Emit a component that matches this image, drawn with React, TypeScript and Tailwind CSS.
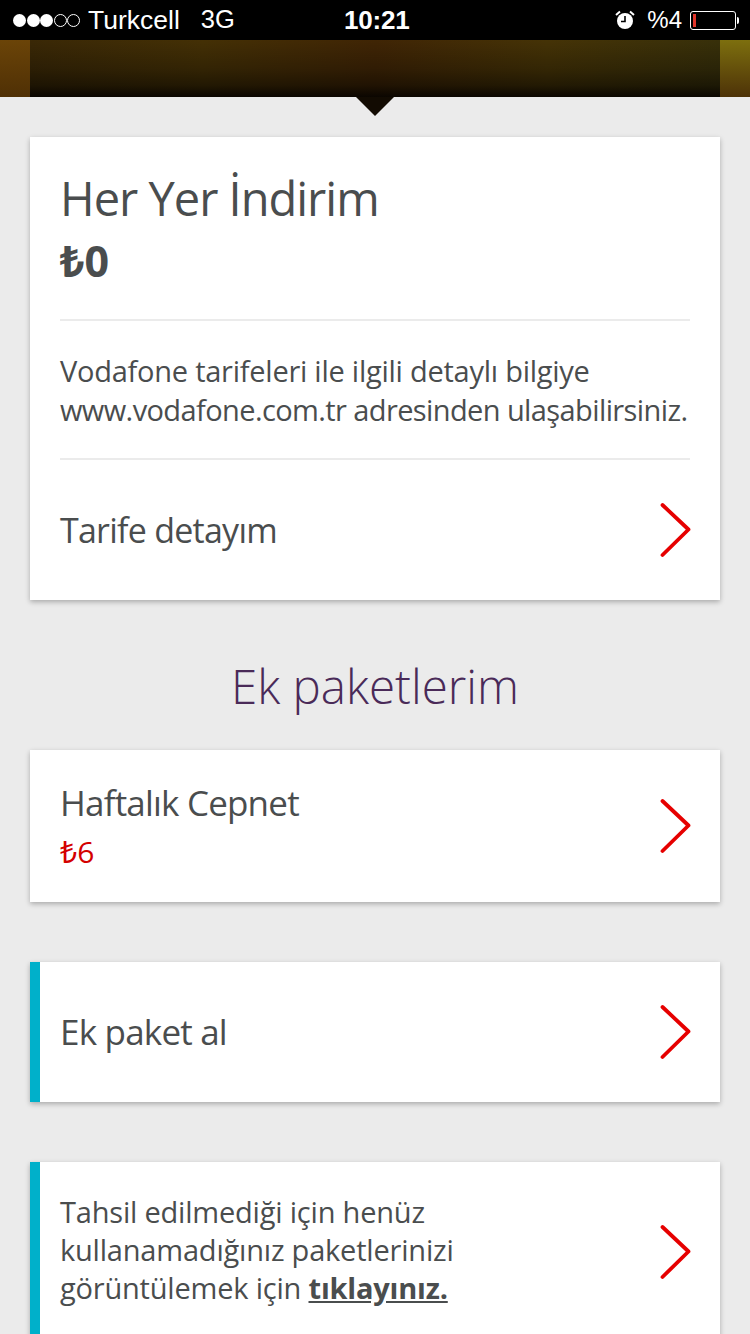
const font = { fontFamily: '"Open Sans", "Noto Sans", sans-serif' };

function Chevron() {
  return (
    <svg width="32" height="56" viewBox="0 0 32 56" className="shrink-0 mr-[-1px]" fill="none">
      <path d="M3.5 3 L29.5 27.5 L3.5 53" stroke="#e60000" strokeWidth="3.8" strokeLinecap="round" strokeLinejoin="round" />
    </svg>
  );
}

function StatusBar() {
  return (
    <div className="h-10 shrink-0 bg-black text-white flex items-center justify-between relative font-['Liberation_Sans',sans-serif] text-[24px] leading-none">
      <div className="flex items-center pl-[13px]">
        <div className="flex gap-[0.5px] items-center">
          {[0, 1, 2].map((i) => (
            <span key={i} className="w-[13px] h-[13px] rounded-full bg-white" />
          ))}
          {[0, 1].map((i) => (
            <span key={i} className="w-[13px] h-[13px] rounded-full border border-white" />
          ))}
        </div>
        <span className="ml-[8px] text-[26.5px]">Turkcell</span>
        <span className="ml-[21px] text-[25.5px]">3G</span>
      </div>
      <div className="absolute left-[344px] top-[7px] font-bold text-[26px] tracking-[-0.2px]">10:21</div>
      <div className="flex items-center pr-[11px]">
        <svg width="20" height="20" viewBox="0 0 20 20" className="mr-[12px]">
          <circle cx="10" cy="11" r="8" fill="#fff" />
          <path d="M10 6 V11.5 H6" stroke="#000" strokeWidth="1.6" fill="none" />
          <path d="M1 5 L5 1.5 M19 5 L15 1.5" stroke="#fff" strokeWidth="2" />
        </svg>
        <span>%4</span>
        <div className="ml-[8px] w-[46px] h-[19px] rounded-[3px] border border-white p-[2px] flex">
          <div className="w-[3px] bg-[#e0352b]" />
        </div>
        <div className="w-[2px] h-[7px] bg-white rounded-r-sm ml-[1px]" />
      </div>
    </div>
  );
}

function Header() {
  return (
    <div className="relative h-[57px] shrink-0 bg-[#1a1003]">
      <div className="absolute inset-y-0 left-0 w-[30px] bg-[linear-gradient(180deg,#6b4408,#4f3005)]" />
      <div className="absolute inset-y-0 right-0 w-[30px] bg-[linear-gradient(180deg,#7d6f0e,#4d3208)]" />
      <div className="absolute inset-y-0 left-[30px] right-[30px] bg-[linear-gradient(180deg,rgba(0,0,0,0)_0%,rgba(0,0,0,0.25)_50%,rgba(0,0,0,0.5)_80%,rgba(8,4,0,0.95)_100%),linear-gradient(90deg,#3a2806_0%,#443005_25%,#402505_50%,#453306_75%,#38300a_100%)]" />
      <div className="absolute left-[356px] top-[57px] w-0 h-0 border-l-[19px] border-r-[19px] border-t-[19px] border-l-transparent border-r-transparent border-t-[#120b02]" />
    </div>
  );
}

export default function App() {
  return (
    <div className="w-[750px] h-[1334px] overflow-hidden bg-[#ebebeb] flex flex-col text-[#4a4d4e]" style={font}>
      <StatusBar />
      <Header />
      <div className="px-[30px] pt-[40px] flex flex-col">
        <div className="bg-white h-[463px] shadow-[0_2px_5px_rgba(0,0,0,0.28)] px-[30px] flex flex-col">
          <div className="h-[184px] pt-[28px] border-b-2 border-[#ebebeb]">
            <div className="text-[47px] leading-[66px] tracking-[-1px]">Her Yer İndirim</div>
            <div className="text-[43px] leading-[60px] font-bold">₺0</div>
          </div>
          <div className="h-[139px] border-b-2 border-[#ebebeb] pt-[30px] text-[29px] leading-[39px] tracking-[-0.6px] whitespace-nowrap">
            <div className="tracking-[-0.25px]">Vodafone tarifeleri ile ilgili detaylı bilgiye</div>
            <div>www.vodafone.com.tr adresinden ulaşabilirsiniz.</div>
          </div>
          <div className="flex-1 flex items-center justify-between">
            <span className="text-[34px] tracking-[-0.75px]">Tarife detayım</span>
            <Chevron />
          </div>
        </div>

        <div className="h-[150px] pt-[22px] flex items-center justify-center text-[47.5px] font-[350] text-[#4a2a58]">Ek paketlerim</div>

        <div className="bg-white h-[152px] shadow-[0_2px_5px_rgba(0,0,0,0.28)] pl-[30px] pr-[30px] flex items-center justify-between">
          <div>
            <div className="text-[35px] leading-[46px] tracking-[-0.8px]">Haftalık Cepnet</div>
            <div className="text-[30px] leading-[40px] text-[#d40000] mt-[6px]">₺6</div>
          </div>
          <Chevron />
        </div>

        <div className="mt-[60px] bg-white h-[140px] border-l-[10px] border-[#00b0ca] shadow-[0_2px_5px_rgba(0,0,0,0.28)] pl-[20px] pr-[30px] flex items-center justify-between">
          <span className="text-[35px] tracking-[-0.8px]">Ek paket al</span>
          <Chevron />
        </div>

        <div className="mt-[60px] bg-white h-[180px] border-l-[10px] border-[#00b0ca] shadow-[0_2px_5px_rgba(0,0,0,0.28)] pl-[20px] pr-[30px] flex items-center justify-between">
          <div className="text-[29px] leading-[38px] tracking-[-0.2px] whitespace-nowrap pb-[4px]">
            <div>Tahsil edilmediği için henüz</div>
            <div>kullanamadığınız paketlerinizi</div>
            <div>görüntülemek için <span className="font-bold underline">tıklayınız.</span></div>
          </div>
          <Chevron />
        </div>
      </div>
    </div>
  );
}
